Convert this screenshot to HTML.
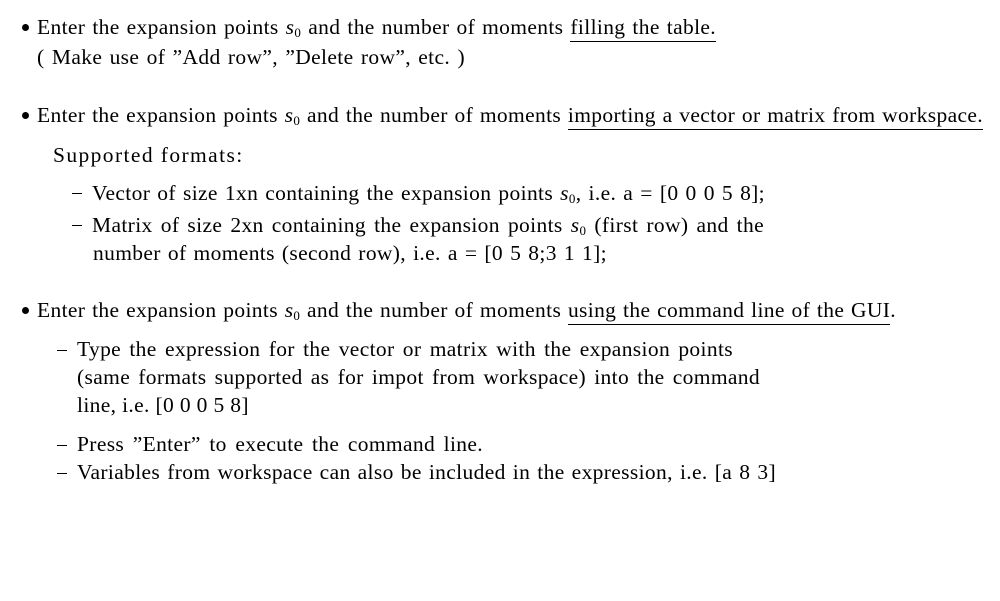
<!DOCTYPE html>
<html><head><meta charset="utf-8"><style>
html,body{margin:0;padding:0;background:#fff;}
body{width:1000px;height:601px;position:relative;overflow:hidden;font-family:"Liberation Serif",serif;color:#000;font-size:21.5px;letter-spacing:0.35px;}
.l{position:absolute;white-space:nowrap;text-align:justify;text-align-last:justify;line-height:24px;height:24px;overflow:visible;}
.n{text-align:left;text-align-last:left;}
.b{position:absolute;width:7px;height:7px;border-radius:50%;background:#000;}
.d{position:absolute;width:10px;height:1.3px;background:#000;}
.u{border-bottom:1.2px solid #000;padding-bottom:2px;}
sub{font-size:13px;vertical-align:-3px;line-height:0;}
i{font-style:italic;}
</style></head><body>
<div class="b" style="left:22px;top:24px"></div>
<div class="l" style="left:37px;top:15px;width:679px">Enter the expansion points <i>s</i><sub>0</sub> and the number of moments <span class="u">filling the table.</span></div>
<div class="l" style="left:37px;top:45px;width:428px">( Make use of ”Add row”, ”Delete row”, etc. )</div>

<div class="b" style="left:22px;top:112px"></div>
<div class="l" style="left:37px;top:103px;width:946px">Enter the expansion points <i>s</i><sub>0</sub> and the number of moments <span class="u">importing a vector or matrix from workspace.</span></div>
<div class="l n" style="left:53px;top:143px;letter-spacing:1.4px">Supported formats:</div>
<div class="d" style="left:72px;top:193px"></div>
<div class="l" style="left:92px;top:181px;width:673px">Vector of size 1xn containing the expansion points <i>s</i><sub>0</sub>, i.e. a = [0 0 0 5 8];</div>
<div class="d" style="left:72px;top:225px"></div>
<div class="l" style="left:92px;top:213px;width:672px">Matrix of size 2xn containing the expansion points <i>s</i><sub>0</sub> (first row) and the</div>
<div class="l" style="left:93px;top:241px;width:514px">number of moments (second row), i.e. a = [0 5 8;3 1 1];</div>

<div class="b" style="left:22px;top:307px"></div>
<div class="l" style="left:37px;top:298px;width:859px">Enter the expansion points <i>s</i><sub>0</sub> and the number of moments <span class="u">using the command line of the GUI</span>.</div>
<div class="d" style="left:57px;top:350px"></div>
<div class="l" style="left:77px;top:337px;width:656px">Type the expression for the vector or matrix with the expansion points</div>
<div class="l" style="left:77px;top:365px;width:683px">(same formats supported as for impot from workspace) into the command</div>
<div class="l n" style="left:77px;top:393px;">line, i.e. [0 0 0 5 8]</div>
<div class="d" style="left:57px;top:445px"></div>
<div class="l" style="left:77px;top:432px;width:406px">Press ”Enter” to execute the command line.</div>
<div class="d" style="left:57px;top:473px"></div>
<div class="l" style="left:77px;top:460px;width:699px">Variables from workspace can also be included in the expression, i.e. [a 8 3]</div>
</body></html>
